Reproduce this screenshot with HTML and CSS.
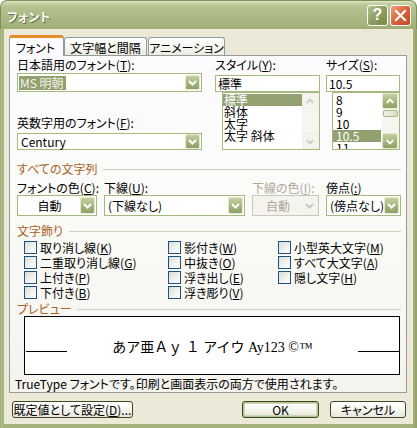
FILE: index.html
```html
<!DOCTYPE html>
<html lang="ja">
<head>
<meta charset="utf-8">
<title>フォント</title>
<link rel="stylesheet" href="styles.css">
</head>
<body>
<div class="window">
  <div class="titlebar">
    <span class="title">フォント</span>
    <div class="tbtns">
      <span class="tbtn help">?</span>
      <span class="tbtn close"><svg width="13" height="13" viewBox="0 0 13 13"><path d="M2 2 L11 11 M11 2 L2 11" stroke="#fff" stroke-width="2.2" stroke-linecap="square"/></svg></span>
    </div>
  </div>
  <div class="client">
    <div class="tabs">
      <div class="tab active">フォント</div>
      <div class="tab t2">文字幅と間隔</div>
      <div class="tab t3">アニメーション</div>
    </div>
    <div class="panel">
      <div class="top">
        <div class="col1">
          <div class="lbl">日本語用のフォント(<u>T</u>):</div>
          <div class="combo c-jp">
            <span class="val"><span class="sel">MS 明朝</span></span>
            <span class="dd"><svg width="15" height="15" viewBox="0 0 15 15"><path d="M4 6 L7.5 9.5 L11 6" stroke="#fff" stroke-width="2" fill="none"/></svg></span>
          </div>
          <div class="lbl l2">英数字用のフォント(<u>F</u>):</div>
          <div class="combo c-en">
            <span class="val">Century</span>
            <span class="dd"><svg width="15" height="15" viewBox="0 0 15 15"><path d="M4 6 L7.5 9.5 L11 6" stroke="#fff" stroke-width="2" fill="none"/></svg></span>
          </div>
        </div>
        <div class="col2">
          <div class="lbl">スタイル(<u>Y</u>):</div>
          <div class="textbox">標準</div>
          <div class="listbox lb-style">
            <div class="items">
              <div class="item on">標準</div>
              <div class="item">斜体</div>
              <div class="item">太字</div>
              <div class="item">太字 斜体</div>
            </div>
            <div class="vscroll">
              <span class="sbtn off"><svg width="15" height="15" viewBox="0 0 15 15"><path d="M4 9 L7.5 5.5 L11 9" stroke="#CFCDBF" stroke-width="2" fill="none"/></svg></span>
              <span class="track"></span>
              <span class="sbtn off"><svg width="15" height="15" viewBox="0 0 15 15"><path d="M4 6 L7.5 9.5 L11 6" stroke="#CFCDBF" stroke-width="2" fill="none"/></svg></span>
            </div>
          </div>
        </div>
        <div class="col3">
          <div class="lbl">サイズ(<u>S</u>):</div>
          <div class="textbox">10.5</div>
          <div class="listbox lb-size">
            <div class="items">
              <div class="item">8</div>
              <div class="item">9</div>
              <div class="item">10</div>
              <div class="item on">10.5</div>
              <div class="item">11</div>
            </div>
            <div class="vscroll">
              <span class="sbtn"><svg width="15" height="15" viewBox="0 0 15 15"><path d="M4 9 L7.5 5.5 L11 9" stroke="#fff" stroke-width="2" fill="none"/></svg></span>
              <span class="track"><span class="thumb"></span></span>
              <span class="sbtn"><svg width="15" height="15" viewBox="0 0 15 15"><path d="M4 6 L7.5 9.5 L11 6" stroke="#fff" stroke-width="2" fill="none"/></svg></span>
            </div>
          </div>
        </div>
      </div>

      <div class="group g1"><span class="gtext">すべての文字列</span><span class="gline"></span></div>
      <div class="row2">
        <div class="f f1">
          <div class="lbl">フォントの色(<u>C</u>):</div>
          <div class="combo tall"><span class="val center">自動</span><span class="dd big"><svg width="15" height="17" viewBox="0 0 15 17"><path d="M4 7 L7.5 10.5 L11 7" stroke="#fff" stroke-width="2" fill="none"/></svg></span></div>
        </div>
        <div class="f f2">
          <div class="lbl">下線(<u>U</u>):</div>
          <div class="combo tall"><span class="val">(下線なし)</span><span class="dd big"><svg width="15" height="17" viewBox="0 0 15 17"><path d="M4 7 L7.5 10.5 L11 7" stroke="#fff" stroke-width="2" fill="none"/></svg></span></div>
        </div>
        <div class="f f3">
          <div class="lbl dis">下線の色(<u>I</u>):</div>
          <div class="combo tall disabled"><span class="val center">自動</span><span class="dd big off"><svg width="15" height="17" viewBox="0 0 15 17"><path d="M4 7 L7.5 10.5 L11 7" stroke="#C9C7BA" stroke-width="2" fill="none"/></svg></span></div>
        </div>
        <div class="f f4">
          <div class="lbl">傍点(<u>:</u>)</div>
          <div class="combo tall"><span class="val">(傍点なし)</span><span class="dd big"><svg width="15" height="17" viewBox="0 0 15 17"><path d="M4 7 L7.5 10.5 L11 7" stroke="#fff" stroke-width="2" fill="none"/></svg></span></div>
        </div>
      </div>

      <div class="group g2"><span class="gtext">文字飾り</span><span class="gline"></span></div>
      <div class="checks">
        <label class="chk"><span class="box"></span>取り消し線(<u>K</u>)</label>
        <label class="chk"><span class="box"></span>影付き(<u>W</u>)</label>
        <label class="chk"><span class="box"></span>小型英大文字(<u>M</u>)</label>
        <label class="chk"><span class="box"></span>二重取り消し線(<u>G</u>)</label>
        <label class="chk"><span class="box"></span>中抜き(<u>O</u>)</label>
        <label class="chk"><span class="box"></span>すべて大文字(<u>A</u>)</label>
        <label class="chk"><span class="box"></span>上付き(<u>P</u>)</label>
        <label class="chk"><span class="box"></span>浮き出し(<u>E</u>)</label>
        <label class="chk"><span class="box"></span>隠し文字(<u>H</u>)</label>
        <label class="chk"><span class="box"></span>下付き(<u>B</u>)</label>
        <label class="chk"><span class="box"></span>浮き彫り(<u>V</u>)</label>
      </div>

      <div class="group g3"><span class="gtext">プレビュー</span><span class="gline"></span></div>
      <div class="preview">
        <span class="pline"></span>
        <span class="ptext">あア亜Ａｙ １ アイウ Ay123 ©™</span>
        <span class="pline"></span>
      </div>
      <div class="info">TrueType フォントです。印刷と画面表示の両方で使用されます。</div>
    </div>
    <div class="buttons">
      <button class="btn b-def">既定値として設定(<u>D</u>)...</button>
      <span class="spacer"></span>
      <button class="btn b-ok">OK</button>
      <button class="btn b-cancel">キャンセル</button>
    </div>
  </div>
</div>
</body>
</html>
```

FILE: styles.css
```css
* { box-sizing: border-box; }
html, body { margin: 0; padding: 0; background: #fff; }
body {
  font-family: "Noto Sans CJK JP", "Noto Sans", sans-serif;
  font-size: 12px;
  font-feature-settings: "palt";
  color: #000;
}
u { text-decoration: underline; text-underline-offset: 1px; }

.window {
  width: 417px;
  height: 428px;
  display: flex;
  flex-direction: column;
  background: linear-gradient(to right, #8C9C62 0, #B9C699 1px, #A9B882 2px, #A3B37A 4px, #A3B37A 413px, #93A36A 416px);
  border-radius: 7px 7px 0 0;
  overflow: hidden;
}

.titlebar {
  height: 29px;
  flex: none;
  display: flex;
  align-items: center;
  padding: 2px 5px 0 6px;
  background: linear-gradient(to bottom, #E2E8CB 0, #C8D2A6 2px, #B5C290 6px, #ADBB88 14px, #A6B57F 22px, #9EAE74 28px, #95A56B 29px);
  border-radius: 7px 7px 0 0;
  border: 1px solid #7F8F55;
  border-bottom: none;
}
.title {
  flex: 1;
  color: #fff;
  font-weight: bold;
  font-size: 12px;
  text-shadow: 1px 1px 0 #62713F;
  letter-spacing: 0.5px;
}
.tbtns { display: flex; gap: 2px; margin-top: -2px; }
.tbtn {
  width: 21px;
  height: 21px;
  border: 1px solid #fff;
  border-radius: 3px;
  display: flex;
  align-items: center;
  justify-content: center;
}
.help {
  background: linear-gradient(135deg, #B3C08E 0, #8E9E62 50%, #76884A 100%);
  color: #fff;
  font-family: "Liberation Sans", sans-serif;
  font-weight: bold;
  font-size: 16px;
}
.close {
  background: linear-gradient(135deg, #EFA07F 0, #D8623A 50%, #C2461F 100%);
}

.client {
  flex: 1;
  margin: 0 4px 4px 4px;
  background: #ECE9D8;
  padding: 6px 0 0 5px;
  display: flex;
  flex-direction: column;
}

.tabs {
  display: flex;
  align-items: flex-end;
  height: 20px;
  flex: none;
}
.tab {
  height: 18px;
  border: 1px solid #919B9C;
  border-bottom: none;
  border-radius: 3px 3px 0 0;
  background: linear-gradient(to bottom, #FFFFFF 0, #F6F5F0 60%, #ECEAE1 100%);
  display: flex;
  align-items: center;
  justify-content: center;
  padding-top: 1px;
}
.tab.active {
  width: 55px;
  height: 21px;
  margin-bottom: -1px;
  background: #FCFCFE;
  border-top: 3px solid #E68B2C;
  position: relative;
  z-index: 1;
  padding-top: 0;
  padding-right: 2px;
}
.t2 { width: 83px; }
.t3 { width: 77px; margin-left: 1px; }

.panel {
  width: 398px;
  height: 338px;
  flex: none;
  border: 1px solid #919B9C;
  background: linear-gradient(to bottom, #FCFCFE 0, #FAFAF7 50%, #F4F3EE 100%);
  padding: 2px 0 0 7px;
}

.lbl { height: 13px; line-height: 13px; white-space: nowrap; }
.lbl.dis { color: #ACA899; }

.top { display: flex; align-items: flex-start; }
.col1 { width: 185px; }
.col2 { width: 105px; margin-left: 13px; }
.col3 { width: 74px; margin-left: 6px; }

.combo {
  display: flex;
  align-items: center;
  border: 1px solid #A5B97F;
  background: #fff;
  padding: 0 1px 0 1px;
}
.combo .val { flex: 1; padding-left: 2px; white-space: nowrap; line-height: 13px; }
.combo .val.center { text-align: center; padding-right: 2px; }
.c-jp { margin-top: 2px; height: 19px; }
.c-jp .val { padding-left: 0; }
.sel { background: #93A070; color: #F4F4EC; padding: 0 2px 0 1px; display: inline-block; line-height: 14px; }
.l2 { margin-top: 24px; }
.c-en { margin-top: 4px; height: 17px; }

.dd {
  width: 15px;
  height: 15px;
  flex: none;
  display: flex;
  border: 1px solid #E4EAD2;
  border-radius: 2px;
  background: linear-gradient(to bottom, #C3CFA0 0, #A7B77F 50%, #8F9F65 100%);
}
.dd svg { display: block; margin: -1px; }
.dd.big { height: 17px; }
.combo.tall { margin-top: 1px; height: 21px; }
.combo.disabled { background: #F4F3EE; border-color: #CAC8BB; color: #ACA899; }
.dd.off { background: #F4F3EE; border-color: #F4F3EE; }

.textbox {
  margin-top: 4px;
  height: 17px;
  border: 1px solid #A5B97F;
  background: #fff;
  padding-left: 2px;
  line-height: 15px;
}

.listbox {
  height: 58px;
  border: 1px solid #A5B97F;
  background: #fff;
  display: flex;
}
.lb-style { margin-left: 7px; width: 98px; }
.lb-size { margin-left: 6px; width: 68px; }
.items { flex: 1; padding-top: 1px; }
.lb-size .items { overflow: hidden; }
.item { height: 12px; line-height: 12px; padding-left: 1px; white-space: nowrap; }
.item.on { background: #93A070; color: #fff; }
.lb-size .item { padding-left: 3px; }
.lb-size .item.on { margin-right: 1px; }

.vscroll {
  width: 17px;
  flex: none;
  display: flex;
  flex-direction: column;
  padding: 0 1px 0 0;
  background: #F6F5EF;
}
.sbtn {
  width: 16px;
  height: 16px;
  flex: none;
  display: flex;
  align-items: center;
  justify-content: center;
  border: 1px solid #E4EAD2;
  border-radius: 2px;
  background: linear-gradient(to bottom, #C3CFA0 0, #A7B77F 50%, #8F9F65 100%);
}
.sbtn.off { background: #F4F3EE; border-color: #F0EFE8; }
.track { flex: 1; display: flex; flex-direction: column; padding-top: 1px; }
.thumb {
  height: 7px;
  border: 1px solid #A9B885;
  border-radius: 2px;
  background: linear-gradient(to right, #EEF1E4, #D9DFC5);
  margin: 0 0 0 1px;
}

.group {
  display: flex;
  align-items: center;
  height: 13px;
  width: 384px;
}
.gtext { color: #A8611F; line-height: 13px; white-space: nowrap; }
.gline { flex: 1; height: 1px; background: #D0D0BF; margin-left: 6px; margin-top: 1px; }
.g1 { margin-top: 12px; }
.g2 { margin-top: 8px; }
.g3 { margin-top: 2px; }

.row2 { display: flex; margin-top: 6px; }
.f1 { width: 80px; }
.f2 { width: 141px; margin-left: 7px; }
.f3 { width: 67px; margin-left: 7px; }
.f4 { width: 75px; margin-left: 7px; }

.checks {
  display: grid;
  grid-template-columns: 144px 110px 1fr;
  grid-auto-rows: 15px;
  margin: 3px 0 0 7px;
}
.chk { display: flex; align-items: center; white-space: nowrap; line-height: 13px; }
.box {
  width: 13px;
  height: 13px;
  border: 1px solid #1C5180;
  background: linear-gradient(135deg, #DCDCD7 0, #F2F2EF 60%, #FFFFFF 100%);
  margin-right: 3px;
  flex: none;
}

.preview {
  margin: 1px 0 0 7px;
  width: 376px;
  height: 59px;
  border: 1px solid #000;
  background: #fff;
  display: flex;
  align-items: center;
  padding-left: 1px;
}
.pline { width: 41px; height: 1px; background: #000; margin-top: 12px; flex: none; }
.ptext {
  flex: 1;
  text-align: center;
  font-family: "Liberation Serif", "Noto Sans CJK JP", serif;
  font-size: 14px;
  font-feature-settings: normal;
  white-space: nowrap;
}
.info { margin: 2px 0 0 -2px; line-height: 13px; white-space: nowrap; }

.buttons {
  display: flex;
  margin-top: 8px;
  padding: 0 7px 0 3px;
}
.spacer { flex: 1; }
.btn {
  height: 17px;
  font-family: inherit;
  font-size: 12px;
  font-feature-settings: "palt";
  color: #000;
  border: 1px solid #3B4A23;
  border-radius: 3px;
  background: linear-gradient(to bottom, #FFFFFF 0, #F6F6F1 50%, #E8E6DB 100%);
  padding: 0;
  margin: 0;
  line-height: 13px;
  display: flex;
  align-items: center;
  justify-content: center;
}
.b-def { width: 121px; }
.b-ok { width: 77px; box-shadow: inset 0 0 0 1px #B4C393, inset 0 0 0 2px #CFD8B5; }
.b-cancel { width: 76px; margin-left: 11px; }
```
